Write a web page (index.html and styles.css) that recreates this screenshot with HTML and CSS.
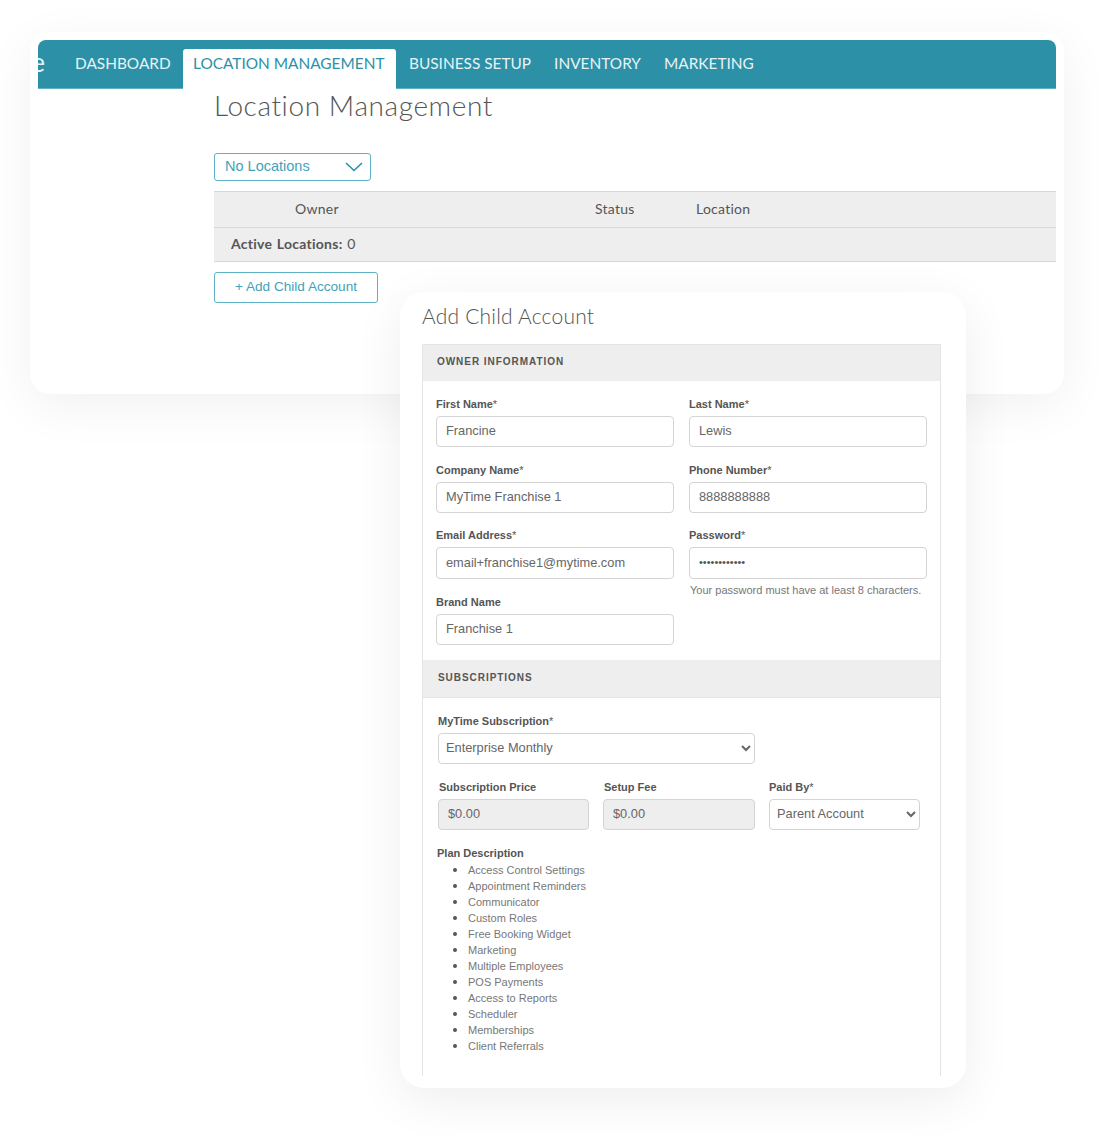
FILE: index.html
```html
<!DOCTYPE html>
<html lang="en">
<head>
<meta charset="utf-8">
<title>Location Management</title>
<link rel="stylesheet" href="styles.css">
</head>
<body>
<main class="stage">
  <section class="back-card">
    <nav class="nav">
      <span class="nav-logo"><span>e</span></span>
      <a class="nav-item nav-dashboard">DASHBOARD</a>
      <a class="nav-item nav-active">LOCATION MANAGEMENT</a>
      <a class="nav-item nav-business">BUSINESS SETUP</a>
      <a class="nav-item nav-inventory">INVENTORY</a>
      <a class="nav-item">MARKETING</a>
    </nav>
    <div class="page">
      <h1 class="page-title">Location Management</h1>
      <div class="loc-select">
        <span>No Locations</span>
        <svg class="chev" width="18" height="10" viewBox="0 0 18 10" aria-hidden="true"><path d="M1 1l8 7.5L17 1" fill="none" stroke="#2c90a7" stroke-width="1.6"/></svg>
      </div>
      <div class="table">
        <div class="thead">
          <span class="col-owner">Owner</span>
          <span class="col-status">Status</span>
          <span>Location</span>
        </div>
        <div class="tsum"><b>Active Locations:</b> 0</div>
      </div>
      <button class="add-btn" type="button">+ Add Child Account</button>
    </div>
  </section>

  <section class="front-card">
    <h2 class="modal-title">Add Child Account</h2>
    <div class="panel">
      <h3 class="panel-head">OWNER INFORMATION</h3>
      <div class="owner-form">
        <div class="form-col">
          <label class="field field-gap"><span class="lbl">First Name<span class="req">*</span></span><input class="inp" value="Francine"></label>
          <label class="field"><span class="lbl">Company Name<span class="req">*</span></span><input class="inp" value="MyTime Franchise 1"></label>
          <label class="field field-tall field-gap"><span class="lbl">Email Address<span class="req">*</span></span><input class="inp" value="email+franchise1@mytime.com"></label>
          <label class="field"><span class="lbl">Brand Name</span><input class="inp" value="Franchise 1"></label>
        </div>
        <div class="form-col">
          <label class="field field-gap"><span class="lbl">Last Name<span class="req">*</span></span><input class="inp" value="Lewis"></label>
          <label class="field"><span class="lbl">Phone Number<span class="req">*</span></span><input class="inp" value="8888888888"></label>
          <label class="field field-tall field-gap"><span class="lbl">Password<span class="req">*</span></span><input class="inp inp-pass" type="password" value="abcdefghijkl"></label>
          <p class="hint">Your password must have at least 8 characters.</p>
        </div>
      </div>
      <h3 class="panel-head panel-head-sub">SUBSCRIPTIONS</h3>
      <div class="subs">
        <label class="field sub-plan"><span class="lbl">MyTime Subscription<span class="req">*</span></span>
          <select class="inp sel"><option>Enterprise Monthly</option></select></label>
        <div class="sub-row">
          <label class="field f-price"><span class="lbl lbl-in">Subscription Price</span><input class="inp inp-off" value="$0.00" disabled></label>
          <label class="field f-fee"><span class="lbl lbl-in">Setup Fee</span><input class="inp inp-off" value="$0.00" disabled></label>
          <label class="field f-paid"><span class="lbl">Paid By<span class="req">*</span></span><select class="inp sel"><option>Parent Account</option></select></label>
        </div>
        <div class="plan">
          <div class="lbl">Plan Description</div>
          <ul class="plan-list">
            <li>Access Control Settings</li>
            <li>Appointment Reminders</li>
            <li>Communicator</li>
            <li>Custom Roles</li>
            <li>Free Booking Widget</li>
            <li>Marketing</li>
            <li>Multiple Employees</li>
            <li>POS Payments</li>
            <li>Access to Reports</li>
            <li>Scheduler</li>
            <li>Memberships</li>
            <li>Client Referrals</li>
          </ul>
        </div>
      </div>
    </div>
  </section>
</main>
</body>
</html>
```
FILE: styles.css
```css
* { box-sizing: border-box; }
html, body { margin: 0; background: #fff; }
.stage {
  position: relative;
  width: 1114px;
  height: 1136px;
  overflow: hidden;
  padding: 32px 50px 0 30px;
  font-family: "Liberation Sans", Arial, sans-serif;
}

/* Back card */
.back-card {
  height: 362px;
  padding: 8px 8px 0;
  background: #fff;
  border-radius: 20px;
  box-shadow: 0 12px 50px rgba(0, 0, 0, .06);
}
.nav {
  display: flex;
  align-items: flex-end;
  height: 49px;
  padding-top: 9px;
  background: #2c90a7;
  border-bottom: 1px solid #5fb0c3;
  border-radius: 8px 8px 0 0;
  font-family: Lato, sans-serif;
  font-size: 15.4px;
  color: #e6f3f6;
}
.nav-logo {
  display: flex;
  justify-content: flex-end;
  align-self: center;
  width: 7px;
  margin-right: 30px;
  overflow: hidden;
  font-size: 26px;
  line-height: 28px;
  position: relative;
  top: -7px;
}
.nav-item {
  display: block;
  height: 39px;
  line-height: 28px;
  white-space: nowrap;
}
.nav-dashboard { width: 108px; }
.nav-active {
  width: 213px;
  height: 40px;
  margin-bottom: -1px;
  margin-right: 13px;
  padding-left: 10px;
  background: #fff;
  color: #2c90a7;
  border-radius: 3px 3px 0 0;
}
.nav-business { margin-right: 23px; }
.nav-inventory { margin-right: 23px; }

.page { padding-left: 176px; }
.page-title {
  margin: -1px 0 0;
  height: 65px;
  font-family: Lato, sans-serif;
  font-weight: 300;
  font-size: 28px;
  line-height: 34px;
  color: #555;
  letter-spacing: .6px;
}
.loc-select {
  display: flex;
  align-items: center;
  justify-content: space-between;
  width: 157px;
  height: 28px;
  padding: 0 7px 0 10px;
  border: 1px solid #5cb3c7;
  border-radius: 3px;
  font-size: 14.5px;
  line-height: 24px;
  color: #3fa3ba;
}
.loc-select span { margin-top: -2px; }
.table {
  margin-top: 10px;
  background: #eee;
  border-top: 1px solid #d8d8d8;
  border-bottom: 1px solid #d8d8d8;
  font-family: Lato, sans-serif;
  font-size: 14px;
  letter-spacing: .25px;
  color: #555;
}
.thead {
  display: flex;
  height: 36px;
  align-items: center;
  border-bottom: 1px solid #d8d8d8;
  padding-left: 81px;
  padding-bottom: 2px;
}
.col-owner { width: 300px; }
.col-status { width: 101px; }
.tsum {
  height: 33px;
  line-height: 31px;
  padding-left: 17px;
  word-spacing: 1px;
}
.add-btn {
  display: block;
  width: 164px;
  height: 31px;
  margin-top: 10px;
  padding: 0 0 3px;
  background: #fff;
  border: 1px solid #5cb3c7;
  border-radius: 3px;
  font-family: "Liberation Sans", Arial, sans-serif;
  font-size: 13.6px;
  color: #3fa3ba;
}

/* Front card */
.front-card {
  position: absolute;
  left: 400px;
  top: 292px;
  width: 566px;
  height: 796px;
  padding: 0 25px 12px 22px;
  background: #fff;
  border-radius: 24px;
  box-shadow: 0 12px 50px rgba(0, 0, 0, .07);
  display: flex;
  flex-direction: column;
}
.modal-title {
  margin: 0;
  height: 52px;
  padding-top: 10px;
  font-family: Lato, sans-serif;
  font-weight: 300;
  font-size: 21px;
  line-height: 27px;
  letter-spacing: .2px;
  color: #555;
}
.panel {
  flex: 1;
  border-left: 1px solid #e4e4e4;
  border-right: 1px solid #e4e4e4;
}
.panel-head {
  margin: 0;
  height: 37px;
  padding-left: 14px;
  background: #eee;
  border-top: 1px solid #e4e4e4;
  font-size: 10px;
  font-weight: 700;
  line-height: 33px;
  letter-spacing: .95px;
  color: #555;
}
.panel-head-sub {
  height: 38px;
  padding-left: 15px;
  border-top: 0;
  border-bottom: 1px solid #e4e4e4;
  line-height: 36px;
}
.owner-form {
  display: flex;
  gap: 15px;
  height: 279px;
  padding: 16px 0 0 13px;
}
.form-col { width: 238px; display: flex; flex-direction: column; gap: 15px; }
.field { display: block; }
.field-gap { margin-bottom: 1px; }
.lbl {
  display: block;
  height: 19px;
  font-size: 11px;
  font-weight: 700;
  line-height: 14px;
  color: #555;
}
.req { font-weight: 400; }
.lbl-in { padding-left: 1px; }
.inp {
  display: block;
  width: 100%;
  height: 31px;
  padding: 0 9px 2px;
  background: #fff;
  border: 1px solid #d4d4d4;
  border-radius: 4px;
  font-family: "Liberation Sans", Arial, sans-serif;
  font-size: 12.8px;
  color: #666;
  outline: 0;
}
.field-tall .inp { height: 32px; }
.inp-pass { font-size: 11px; letter-spacing: 0; color: #555; }
.hint {
  margin: -12px 0 0 1px;
  font-size: 11px;
  line-height: 14px;
  color: #777;
}
.subs { padding: 16px 0 0 15px; }
.sub-plan { width: 317px; }
.sel { padding: 0 2px 2px 3px; }
.sub-row {
  display: flex;
  margin-top: 16px;
}
.f-price { width: 151px; margin-right: 14px; }
.f-fee { width: 152px; margin-right: 14px; }
.f-paid { width: 151px; }
.inp-off { background: #eee; }
.plan { margin-top: 16px; margin-left: -1px; }
.plan .lbl { height: 15px; }
.plan-list {
  margin: 0;
  padding-left: 31px;
  font-size: 11px;
  line-height: 16px;
  color: #777;
}
.plan-list li { height: 16px; }
.plan-list li::marker { font-size: 14px; color: #555; }
```
